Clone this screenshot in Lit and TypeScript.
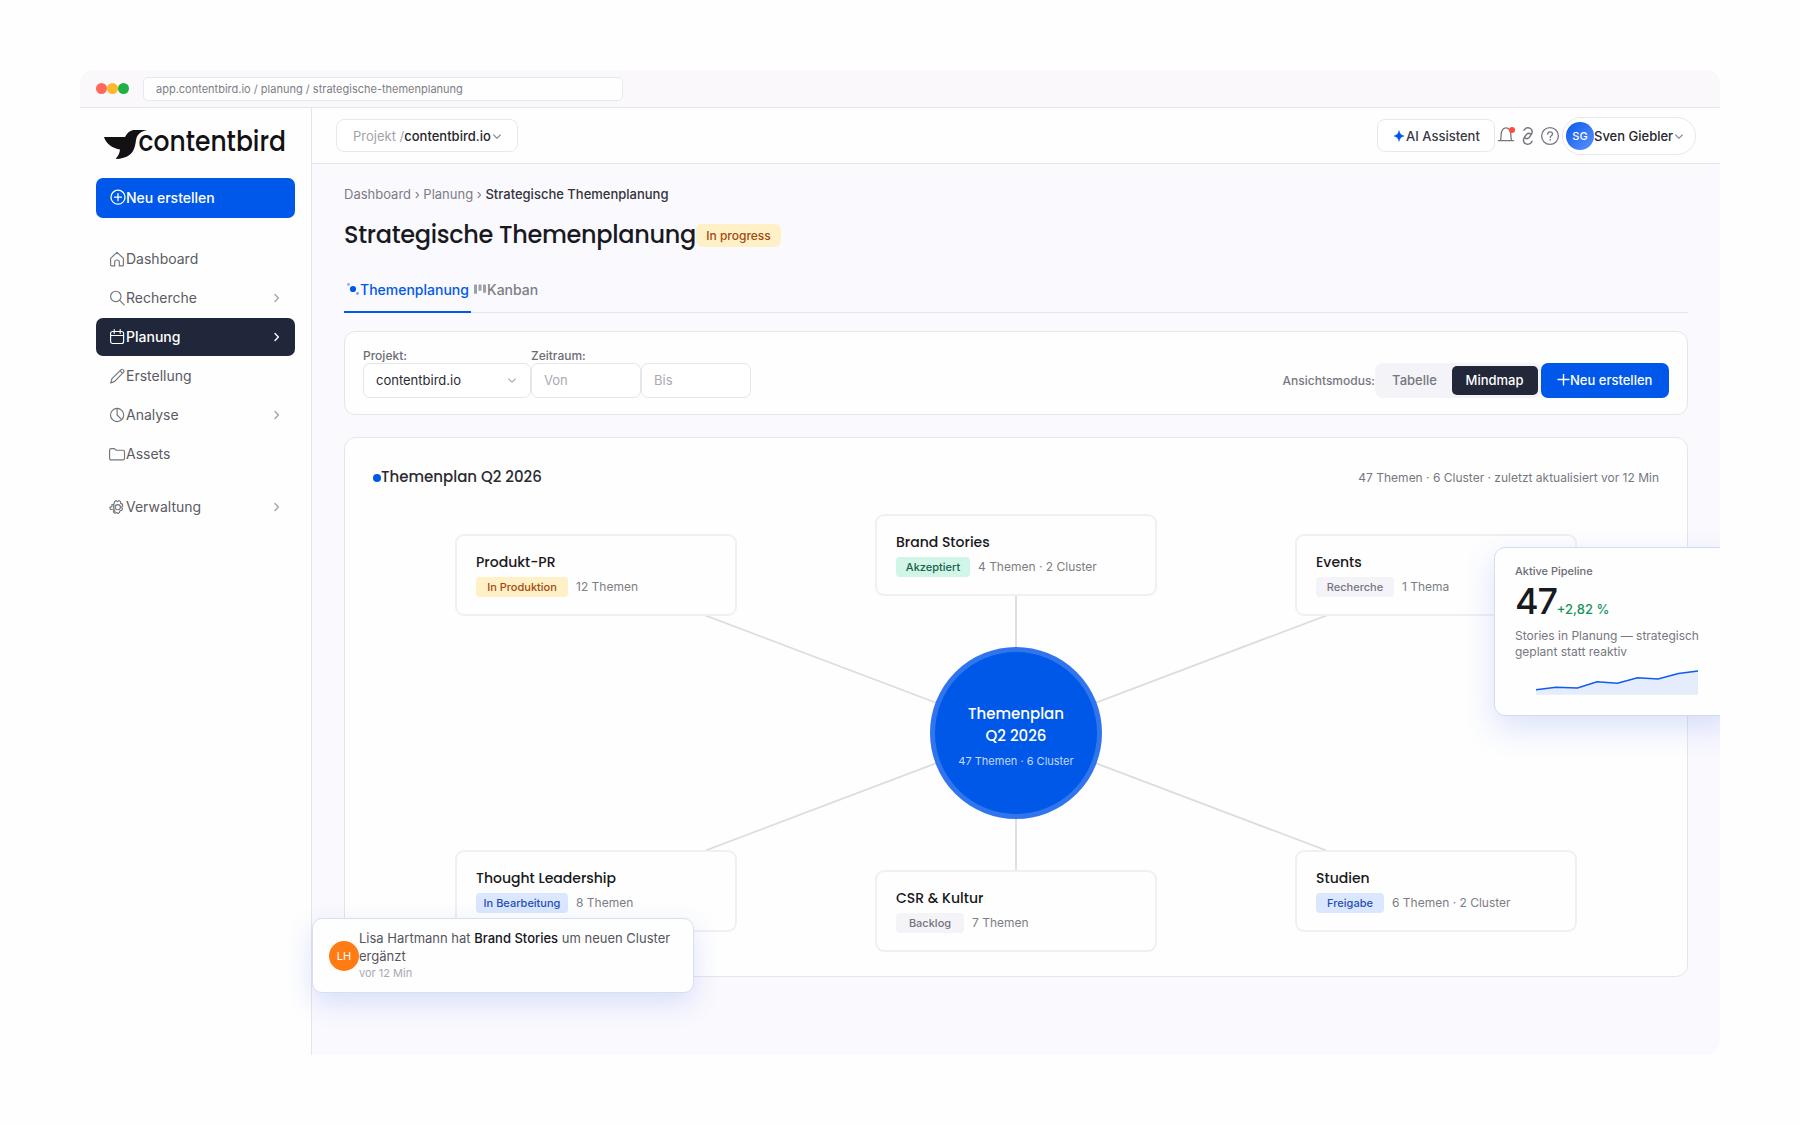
import { LitElement, html, css, svg, nothing } from "lit";
import { customElement } from "lit/decorators.js";
import { classMap } from "lit/directives/class-map.js";
import { styleMap } from "lit/directives/style-map.js";

const chevronRight = html`<svg class="chev" width="8" height="10" viewBox="0 0 8 10" fill="none" stroke="currentColor" stroke-width="1.4" stroke-linecap="round" stroke-linejoin="round"><path d="M2 1.6 5.4 5 2 8.4" /></svg>`;
const chevronDown = html`<svg class="down" width="10" height="8" viewBox="0 0 10 8" fill="none" stroke="currentColor" stroke-width="1.2" stroke-linecap="round" stroke-linejoin="round"><path d="M1.7 3 5 6.200l3.300-3.200" /></svg>`;

const glyphs: Record<string, unknown> = {
  home: svg`<path d="M.6 7.300 7 1.300l6.400 6v6.600a1 1 0 0 1-1 1H9.300V11c0-1.200-.9-2-2.300-2s-2.300.8-2.300 2v3.900H1.600a1 1 0 0 1-1-1z" />`,
  search: svg`<circle cx="5.800" cy="6.400" r="5.200" /><path d="m9.700 10.300 4.400 4.500" />`,
  calendar: svg`<rect x=".6" y="2.500" width="13" height="12" rx="2" /><path d="M.6 6.500h13M4.200.6v3.700M10.200.6v3.700" />`,
  pencil: svg`<path d="m.7 15 1.300-4.300L11.100 1.700a1.300 1.300 0 0 1 1.900 0l.6.600a1.300 1.300 0 0 1 0 1.900L4.700 13.400zM10.200 2.900l2.200 2.200" />`,
  chart: svg`<circle cx="7.100" cy="8" r="6.600" /><path d="M7.100 1.400V8l4.600 4.700" />`,
  folder: svg`<path d="M-.4 4.200c0-1 .6-1.600 1.500-1.600h3.300l1.800 1.600h6.700c1 0 1.600.6 1.600 1.500v6.700c0 1-.6 1.500-1.600 1.500H1.100c-.9 0-1.500-.5-1.500-1.500z" />`,
  gear: svg`<path d="M4.600 1.900 5.900.8l1.600.8L9.200.8l1.300 1 .2 1.800 1.700.7.3 1.700-1.100 1.300.9 1.800-.8 1.500-1.800.3-.4 1.900-1.500.8-1.500-1-1.600.9-1.300-.9-.2-1.800" transform="translate(0 .8)" /><circle cx="7.800" cy="8.200" r="2.600" /><path d="M4.700 2.800C3.300 5.400 3.300 10 5 12.600M4 5.400 1.800 5.700l.2 1.800-2.200.9.700 2.100 2.300-.2" />`,
};

const icon = (name: string) => html`<svg class="ico" width="16" height="16" viewBox="0 0 16 16" fill="none" stroke="currentColor" stroke-width="1.15" stroke-linecap="round" stroke-linejoin="round">${glyphs[name]}</svg>`;

interface NavItem { label: string; icon: string; more?: boolean; active?: boolean; gap?: boolean }
const navItems: NavItem[] = [
  { label: "Dashboard", icon: "home" },
  { label: "Recherche", icon: "search", more: true },
  { label: "Planung", icon: "calendar", more: true, active: true },
  { label: "Erstellung", icon: "pencil" },
  { label: "Analyse", icon: "chart", more: true },
  { label: "Assets", icon: "folder" },
  { label: "Verwaltung", icon: "gear", more: true, gap: true },
];

interface TopicNode { title: string; state: string; tone: string; pill: number; info: string; x: number; y: number; anchor: number }
const topicNodes: TopicNode[] = [
  { title: "Produkt-PR", state: "In Produktion", tone: "amber", pill: 92, info: "12 Themen", x: 455, y: 534, anchor: 40 },
  { title: "Brand Stories", state: "Akzeptiert", tone: "green", pill: 74, info: "4 Themen · 2 Cluster", x: 875, y: 514, anchor: 41 },
  { title: "Events", state: "Recherche", tone: "grey", pill: 78, info: "1 Thema", x: 1295, y: 534, anchor: 40 },
  { title: "Thought Leadership", state: "In Bearbeitung", tone: "blue", pill: 92, info: "8 Themen", x: 455, y: 850, anchor: 42 },
  { title: "CSR & Kultur", state: "Backlog", tone: "grey", pill: 68, info: "7 Themen", x: 875, y: 870, anchor: 41 },
  { title: "Studien", state: "Freigabe", tone: "blue", pill: 68, info: "6 Themen · 2 Cluster", x: 1295, y: 850, anchor: 42 },
];
const canvasLeft = 345;
const canvasTop = 438;
const hub = { x: 1016 - canvasLeft, y: 733 - canvasTop };

@customElement("app-sidebar")
export class AppSidebar extends LitElement {
  static styles = css`
    :host { display: flex; flex-direction: column; box-sizing: border-box; width: 232px; padding: 22px 16px 0; border-right: 1px solid #e6e5ea; background: #fefefe; }
    .logo { display: block; width: 190px; height: 32px; margin-left: 8px; overflow: visible; }
    .word { font: 500 28px Poppins, Inter, "Liberation Sans", sans-serif; fill: #131114; }
    .create { display: flex; align-items: center; height: 40px; margin: 16px 0 22px; padding: 0 14px; border: 0; border-radius: 7px; background: #0058ea; color: #fff; font: 500 14px Inter, sans-serif; }
    .create span { padding-bottom: 1px; }
    .item { display: flex; align-items: center; box-sizing: border-box; height: 38px; margin-bottom: 1px; padding: 0 14px; border-radius: 7px; color: #5b5b63; font-size: 14px; }
    .item.gap { margin-top: 14px; }
    .item.active { background: #20273a; color: #fff; font-weight: 500; }
    .ico { flex: none; overflow: visible; color: #74747c; }
    .item.active .ico, .create .ico { color: #fff; }
    .label { flex: 1; padding-bottom: 1px; }
    .chev { color: #a3a3aa; }
    .item.active .chev { color: #fff; }
  `;
  render() {
    return html`
      <svg class="logo" viewBox="0 0 190 32" role="img">
        <path fill="#131114" d="M0 7h21C23.500 2.500 26.500 0 31 0h12.500C37 1.500 33.300 3.500 32 10c-1 9-3.500 15.500-12.500 17.800C17 28.600 14.500 29 12 29c-.5-1 3.500-3.500 4-9.500C9 18.500 2 14 0 7z" />
        <text class="word" x="34.500" y="21" textLength="147.500" lengthAdjust="spacingAndGlyphs">contentbird</text>
      </svg>
      <button class="create">
        <svg class="ico" width="16" height="16" viewBox="0 0 16 16" fill="none" stroke="currentColor" stroke-width="1.3" stroke-linecap="round"><circle cx="8" cy="7.200" r="7" /><path d="M8 3.700v7M4.500 7.200h7" /></svg>
        <span>Neu erstellen</span>
      </button>
      ${navItems.map((n) => html`
        <div class=${classMap({ item: true, active: !!n.active, gap: !!n.gap })}>
          ${icon(n.icon)}<span class="label">${n.label}</span>${n.more ? chevronRight : nothing}
        </div>`)}
    `;
  }
}

@customElement("app-topbar")
export class AppTopbar extends LitElement {
  static styles = css`
    :host { display: flex; align-items: center; justify-content: space-between; box-sizing: border-box; height: 56px; padding: 0 24px; border-bottom: 1px solid #e6e5ea; background: #fefefe; font-size: 13px; color: #26262e; }
    .box { display: flex; align-items: center; box-sizing: border-box; height: 33px; border: 1px solid #e8e7ec; border-radius: 8px; background: #fff; font-weight: 500; }
    .project { width: 182px; padding-left: 16px; }
    .muted { font-weight: 400; color: #a3a2ab; white-space: pre; }
    .down { color: #8f8f97; margin-left: 1px; }
    .right { display: flex; align-items: center; }
    .ai { width: 118px; padding-left: 16px; color: #3a3a42; }
    .tools { display: block; color: #77777f; }
    .user { display: flex; align-items: center; box-sizing: border-box; width: 134px; height: 38px; padding-left: 3px; border: 1px solid #e8e7ec; border-radius: 19px; background: #fff; font-weight: 500; }
    .face { display: grid; place-items: center; width: 28px; height: 28px; border-radius: 50%; background: linear-gradient(135deg, #0b58ec, #5a93fb); color: #fff; font-size: 11px; }
  `;
  render() {
    return html`
      <div class="box project"><span class="muted">Projekt /</span><span>contentbird.io</span>${chevronDown}</div>
      <div class="right">
        <div class="box ai">
          <svg width="12" height="12" viewBox="0 0 12 12"><path fill="#0058ea" stroke="#0058ea" stroke-width=".5" stroke-linejoin="round" d="M5 .7C5.800 4 7 5.200 10.100 6 7 6.800 5.800 8 5 11.300 4.200 8 3 6.800-.1 6 3 5.200 4.200 4 5 .7z" /></svg>
          <span>AI Assistent</span>
        </div>
        <svg class="tools" width="67" height="24" viewBox="0 0 67 24" fill="none" stroke="currentColor" stroke-width="1.300" stroke-linecap="round" stroke-linejoin="round">
          <path d="M3.400 16.700h15.200M5.400 16.500c.6-1.500.7-3.200.7-5.500 0-4 2-7.200 4.900-7.200s4.900 3.200 4.900 7.200c0 2.300.1 4 .7 5.500" />
          <circle cx="17" cy="6" r="3" fill="#ff4a3d" stroke="none" />
          <g transform="translate(33 12) scale(1.150) translate(-32.700 -11.700)"><path d="M29.200 6.700c1-1.800 3.200-2.700 5-1.800 2.200 1 2.700 3.200 1.500 5.200l-1.400 2.200c-1.100 1.700-2.700 2-4.200 1.200M36.200 16.200c-1 2.300-3.300 3.300-5.300 2.400-2.200-1-2.700-3.400-1.500-5.400l1.500-2.200c1.100-1.600 2.700-1.900 4.100-1.100" /></g>
          <circle cx="55" cy="12" r="8.400" />
          <path d="M52.700 10.200c0-1.400 1-2.300 2.400-2.300s2.400.9 2.400 2.100c0 1.700-2.300 1.800-2.300 3.400" /><path d="M55.200 15.900v.1" stroke-width="1.600" />
        </svg>
        <div class="user"><span class="face">SG</span><span>Sven Giebler</span>${chevronDown}</div>
      </div>
    `;
  }
}

@customElement("topic-map")
export class TopicMap extends LitElement {
  static styles = css`
    :host { display: block; box-sizing: border-box; position: relative; height: 540px; border: 1px solid #e6e5ea; border-radius: 12px; background: #fefefe; }
    .head { display: flex; align-items: center; justify-content: space-between; height: 79px; padding: 0 28px; box-sizing: border-box; }
    .title { display: flex; align-items: center; height: 22px; margin-bottom: 2px; font: 500 15px/22px Poppins, Inter, sans-serif; color: #2b2b33; }
    .title i { width: 8px; height: 8px; margin-top: 3px; border-radius: 50%; background: #0058ea; }
    .meta { font-size: 12px; color: #77777f; }
    .lines { position: absolute; left: 0; top: 0; }
    .node { position: absolute; box-sizing: border-box; width: 282px; height: 82px; padding: 14px 19px; border: 2px solid #f0eff2; border-radius: 9px; background: #fefefe; }
    .name { height: 27px; font: 500 14px/24px Poppins, Inter, sans-serif; color: #191920; white-space: nowrap; }
    .row { display: flex; align-items: center; gap: 8px; font-size: 12px; color: #7d7d84; white-space: nowrap; }
    .info { padding-bottom: 2px; }
    .pill { display: grid; place-items: center; height: 20px; border-radius: 4px; font-size: 11px; font-weight: 500; }
    .amber { background: #fff0c8; color: #a14a0c; }
    .green { background: #d1f5e6; color: #17624b; }
    .grey { background: #f4f3f8; color: #75757f; }
    .blue { background: #dbe7fe; color: #2450b4; }
    .hub { position: absolute; box-sizing: border-box; left: 585px; top: 209px; width: 172px; height: 172px; padding-top: 51px; border: 5px solid #3075ee; border-radius: 50%; background: #0058e8; color: #fff; text-align: center; }
    .hub b { display: block; font: 500 15px/22px Poppins, Inter, sans-serif; }
    .hub span { display: block; margin-top: 7px; font-size: 11px; line-height: 14px; color: #c4dafc; }
  `;
  render() {
    return html`
      <div class="head"><div class="title"><i></i><span>Themenplan Q2 2026</span></div><div class="meta">47 Themen · 6 Cluster · zuletzt aktualisiert vor 12 Min</div></div>
      <svg class="lines" width="1342" height="538">
        ${topicNodes.map((n) => svg`<line x1=${hub.x} y1=${hub.y} x2=${n.x + 141 - canvasLeft} y2=${n.y + n.anchor - canvasTop} stroke="#dcdbe2" stroke-width="1.800" />`)}
      </svg>
      ${topicNodes.map((n) => html`
        <div class="node" style=${styleMap({ left: `${n.x - canvasLeft}px`, top: `${n.y - canvasTop}px` })}>
          <div class="name">${n.title}</div>
          <div class="row"><span class="pill ${n.tone}" style=${styleMap({ width: `${n.pill}px` })}>${n.state}</span><span class="info">${n.info}</span></div>
        </div>`)}
      <div class="hub"><b>Themenplan</b><b>Q2 2026</b><span>47 Themen · 6 Cluster</span></div>
    `;
  }
}

@customElement("planning-page")
export class PlanningPage extends LitElement {
  static styles = css`
    :host { display: block; padding: 20px 32px 0; background: #faf9fe; color: #26262e; }
    .crumbs { height: 22px; line-height: 21px; font-size: 13px; color: #7d7d85; white-space: pre; }
    .crumbs b { font-weight: 500; color: #33333b; }
    .heading { display: flex; align-items: center; height: 56px; }
    h1 { margin: 2px 0 0; width: 352px; white-space: nowrap; font: 500 24px/36px Poppins, Inter, sans-serif; letter-spacing: -.32px; color: #191922; }
    .status { display: grid; place-items: center; width: 85px; height: 23px; margin-top: 2px; border-radius: 6px; background: #fff0c8; color: #a14a0c; font-size: 12px; font-weight: 500; }
    .tabs { display: flex; box-sizing: border-box; height: 51px; border-bottom: 1px solid #e6e5ea; font-size: 14px; font-weight: 500; }
    .tab { display: flex; align-items: center; box-sizing: border-box; height: 51px; padding: 5px 3px 0; border-bottom: 2px solid transparent; color: #7d7d85; }
    .tab.on { width: 127px; color: #0058ea; border-color: #0058ea; }
    .tab svg { flex: none; overflow: visible; }
    .filters { display: flex; align-items: flex-end; justify-content: space-between; box-sizing: border-box; height: 84px; margin: 18px 0 22px; padding: 0 18px 16px; border: 1px solid #e6e5ea; border-radius: 11px; background: #fefefe; font-size: 13px; }
    .fields, .view, .segment, .dates { display: flex; align-items: center; }
    .caption { height: 15px; line-height: 15px; font-size: 12px; font-weight: 500; color: #6d6d75; }
    .input { display: flex; align-items: center; justify-content: space-between; box-sizing: border-box; width: 110px; height: 35px; padding: 0 13px 1px 12px; border: 1px solid #e6e5ea; border-radius: 7px; background: #fff; color: #a9a8b3; }
    .input.select { width: 168px; color: #2b2b33; }
    .input .down { color: #b4b3bc; }
    .mode { font-size: 12px; font-weight: 500; color: #77777f; }
    .segment { box-sizing: border-box; height: 35px; padding: 3px; border-radius: 8px; background: #f4f3f8; font-weight: 500; color: #77777f; }
    .segment span { display: grid; place-items: center; box-sizing: border-box; height: 29px; width: 74px; padding: 0 1px 1px 0; border-radius: 5px; }
    .segment .on { width: 86px; background: #222739; color: #fff; }
    .new { display: flex; align-items: center; height: 35px; width: 128px; box-sizing: border-box; padding: 0 0 1px 16px; border: 0; border-radius: 7px; background: #0058ea; color: #fff; font: 500 13px Inter, sans-serif; }
  `;
  render() {
    return html`
      <div class="crumbs">Dashboard › Planung › <b>Strategische Themenplanung</b></div>
      <div class="heading"><h1>Strategische Themenplanung</h1><span class="status">In progress</span></div>
      <div class="tabs">
        <div class="tab on">
          <svg width="13" height="14" viewBox="0 0 13 14" fill="#0058ea"><circle cx="6" cy="7" r="3.100" /><circle cx="1.500" cy="2.500" r="1.400" opacity=".45" /><circle cx="10.500" cy="11.500" r="1.400" opacity=".55" /></svg>
          <span>Themenplanung</span>
        </div>
        <div class="tab">
          <svg width="13" height="12" viewBox="0 0 13 12" fill="#a09fa8"><rect x="0" y="1.500" width="3" height="9.300" rx=".6" /><rect x="4.500" y="1.500" width="3" height="6.300" rx=".6" /><rect x="9" y="1.500" width="3" height="8.300" rx=".6" /></svg>
          <span>Kanban</span>
        </div>
      </div>
      <div class="filters">
        <div class="fields">
          <div><div class="caption">Projekt:</div><div class="input select"><span>contentbird.io</span>${chevronDown}</div></div>
          <div><div class="caption">Zeitraum:</div><div class="dates"><div class="input">Von</div><div class="input">Bis</div></div></div>
        </div>
        <div class="view">
          <span class="mode">Ansichtsmodus:</span>
          <div class="segment"><span>Tabelle</span><span class="on">Mindmap</span></div>
          <button class="new"><svg width="13" height="13" viewBox="0 0 13 13" stroke="#fff" stroke-width="1.400" stroke-linecap="round"><path d="M6.500 0v11M1 5.500h11" /></svg><span>Neu erstellen</span></button>
        </div>
      </div>
      <topic-map></topic-map>
    `;
  }
}

@customElement("app-root")
export class AppRoot extends LitElement {
  static styles = css`
    :host { display: block; box-sizing: border-box; width: 1800px; height: 1125px; padding: 70px 80px; background: #fefefe; font-family: Inter, "Liberation Sans", sans-serif; }
    .window { position: relative; display: flex; flex-direction: column; width: 1640px; height: 985px; border-radius: 14px; overflow: hidden; background: #faf9fe; }
    .chrome { display: flex; align-items: center; box-sizing: border-box; height: 38px; padding: 0 16px; border-bottom: 1px solid #e6e5ea; background: #fbf8fc; }
    .dot { width: 11px; height: 11px; border-radius: 50%; }
    .dot.r { background: #ff6a5b; } .dot.y { background: #ffb72b; } .dot.g { background: #1fb145; }
    .url { display: flex; align-items: center; box-sizing: border-box; width: 480px; height: 24px; margin-left: 14px; padding-left: 12px; border: 1px solid #e8e7ec; border-radius: 5px; background: #fefefe; color: #7d7d85; font-size: 11px; }
    .body { display: flex; flex: 1; }
    .main { flex: 1; }
    .pipeline { position: absolute; box-sizing: border-box; left: 1414px; top: 477px; width: 240px; height: 169px; padding: 16px 20px; border: 1px solid #d3dcf2; border-radius: 11px; background: #fefefe; box-shadow: 0 12px 32px rgba(40, 90, 225, .17); color: #77777f; }
    .small { font-size: 11px; font-weight: 500; line-height: 14px; color: #6d6d75; }
    .figure { display: flex; align-items: baseline; height: 46px; line-height: 47px; }
    .big { font: 500 36px/47px Inter, sans-serif; letter-spacing: -1.200px; color: #191922; }
    .up { font-size: 13px; font-weight: 500; color: #17945a; }
    .desc { margin-top: 4px; width: 190px; font-size: 12px; line-height: 16px; }
    .spark { display: block; margin: 9px 0 0 21px; }
    .toast { position: absolute; box-sizing: border-box; left: 232px; top: 848px; display: flex; align-items: center; width: 382px; height: 75px; padding: 0 16px; border: 1px solid #d9def2; border-radius: 10px; background: #fefefe; box-shadow: 0 10px 28px rgba(40, 90, 225, .16); }
    .face { flex: none; display: grid; place-items: center; width: 30px; height: 30px; border-radius: 50%; background: #ff7b14; color: #fff; font-size: 11px; }
    .msg { font-size: 13px; line-height: 18px; color: #55555d; }
    .msg b { font-weight: 500; color: #16161d; }
    .when { font-size: 11px; line-height: 17px; color: #a9a8b3; }
  `;
  render() {
    return html`
      <div class="window">
        <div class="chrome"><i class="dot r"></i><i class="dot y"></i><i class="dot g"></i><div class="url">app.contentbird.io / planung / strategische-themenplanung</div></div>
        <div class="body">
          <app-sidebar></app-sidebar>
          <div class="main"><app-topbar></app-topbar><planning-page></planning-page></div>
        </div>
        <div class="pipeline">
          <div class="small">Aktive Pipeline</div>
          <div class="figure"><span class="big">47</span><span class="up">+2,82 %</span></div>
          <div class="desc">Stories in Planung — strategisch geplant statt reaktiv</div>
          <svg class="spark" width="163" height="27" viewBox="0 0 163 27">
            <path fill="#e5ecfc" d="M0 20.700 20 18.300l21.500.7L61 12.700l20.500 1.600 20-5.600L122 10l20.500-5.400L162 2v23.700H0z" />
            <path fill="none" stroke="#0f5cf2" stroke-width="1.500" d="M0 20.700 20 18.300l21.500.7L61 12.700l20.500 1.600 20-5.600L122 10l20.500-5.400L162 2" />
          </svg>
        </div>
        <div class="toast"><span class="face">LH</span><div><div class="msg">Lisa Hartmann hat <b>Brand Stories</b> um neuen Cluster ergänzt</div><div class="when">vor 12 Min</div></div></div>
      </div>
    `;
  }
}
